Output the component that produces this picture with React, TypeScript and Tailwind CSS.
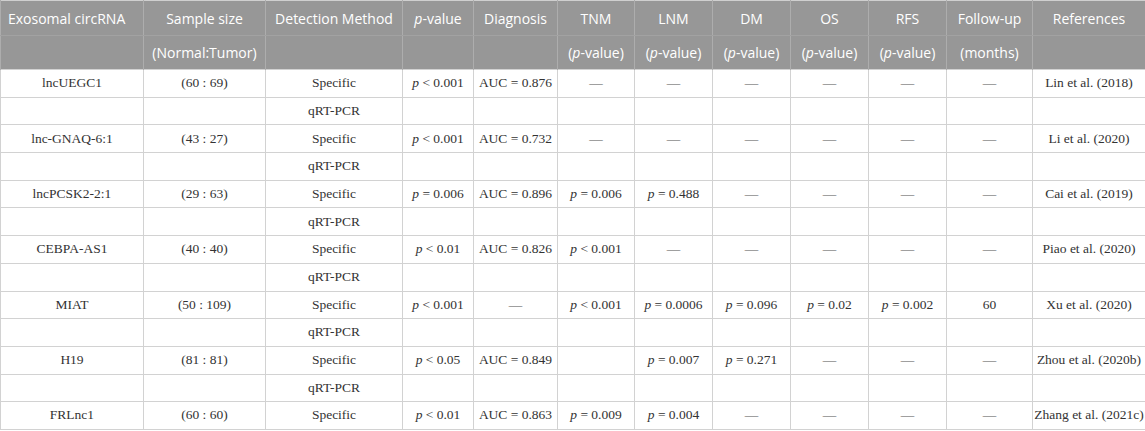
import React from "react";

type Cell = React.ReactNode;

const P = () => <i>p</i>;

const widths = [143, 122, 137, 71, 84, 77, 78, 78, 78, 78, 86, 113];

const D = "—";

const body: Cell[][] = [
  ["lncUEGC1", "(60 : 69)", "Specific", <><P /> &lt; 0.001</>, "AUC = 0.876", D, D, D, D, D, D, "Lin et al. (2018)"],
  ["", "", "qRT-PCR", "", "", "", "", "", "", "", "", ""],
  ["lnc-GNAQ-6:1", "(43 : 27)", "Specific", <><P /> &lt; 0.001</>, "AUC = 0.732", D, D, D, D, D, D, "Li et al. (2020)"],
  ["", "", "qRT-PCR", "", "", "", "", "", "", "", "", ""],
  ["lncPCSK2-2:1", "(29 : 63)", "Specific", <><P /> = 0.006</>, "AUC = 0.896", <><P /> = 0.006</>, <><P /> = 0.488</>, D, D, D, D, "Cai et al. (2019)"],
  ["", "", "qRT-PCR", "", "", "", "", "", "", "", "", ""],
  ["CEBPA-AS1", "(40 : 40)", "Specific", <><P /> &lt; 0.01</>, "AUC = 0.826", <><P /> &lt; 0.001</>, D, D, D, D, D, "Piao et al. (2020)"],
  ["", "", "qRT-PCR", "", "", "", "", "", "", "", "", ""],
  ["MIAT", "(50 : 109)", "Specific", <><P /> &lt; 0.001</>, D, <><P /> &lt; 0.001</>, <><P /> = 0.0006</>, <><P /> = 0.096</>, <><P /> = 0.02</>, <><P /> = 0.002</>, "60", "Xu et al. (2020)"],
  ["", "", "qRT-PCR", "", "", "", "", "", "", "", "", ""],
  ["H19", "(81 : 81)", "Specific", <><P /> &lt; 0.05</>, "AUC = 0.849", "", <><P /> = 0.007</>, <><P /> = 0.271</>, D, D, D, "Zhou et al. (2020b)"],
  ["", "", "qRT-PCR", "", "", "", "", "", "", "", "", ""],
  ["FRLnc1", "(60 : 60)", "Specific", <><P /> &lt; 0.01</>, "AUC = 0.863", <><P /> = 0.009</>, <><P /> = 0.004</>, D, D, D, D, "Zhang et al. (2021c)"],
];

const head1: Cell[] = [
  "Exosomal circRNA",
  "Sample size",
  "Detection Method",
  <><P />-value</>,
  "Diagnosis",
  "TNM",
  "LNM",
  "DM",
  "OS",
  "RFS",
  "Follow-up",
  "References",
];
const pv = <>(<P />-value)</>;
const head2: Cell[] = ["", "(Normal:Tumor)", "", "", "", pv, pv, pv, pv, pv, "(months)", ""];

export default function App() {
  return (
    <div className="w-[1145px] h-[431px] bg-white overflow-hidden">
      <table className="w-[1145px] table-fixed border-collapse border border-[#cfcfcf]">
        <colgroup>
          {widths.map((w, i) => (
            <col key={i} style={{ width: w }} />
          ))}
        </colgroup>
        <thead className="bg-[#979797] text-white font-['Open_Sans',sans-serif] text-[14px]">
          <tr className="h-[35px]">
            {head1.map((c, i) => (
              <th
                key={i}
                className={`font-normal border-x border-[#adadad] border-b border-b-[#a2a2a2] whitespace-nowrap ${i === 0 ? "text-left pl-[7px]" : "text-center"}`}
              >
                {c}
              </th>
            ))}
          </tr>
          <tr className="h-[34px]">
            {head2.map((c, i) => (
              <th key={i} className="font-normal border-x border-[#adadad] text-center whitespace-nowrap">
                {c}
              </th>
            ))}
          </tr>
        </thead>
        <tbody className="font-['Liberation_Serif',serif] text-[13.5px] text-[#333]">
          {body.map((row, r) => (
            <tr key={r} className="h-[27.7px]">
              {row.map((c, i) => (
                <td
                  key={i}
                  className={`border border-[#d2d2d2] text-center whitespace-nowrap p-0 ${c === D ? "text-[#555]" : ""}`}
                >
                  {c}
                </td>
              ))}
            </tr>
          ))}
        </tbody>
      </table>
    </div>
  );
}
